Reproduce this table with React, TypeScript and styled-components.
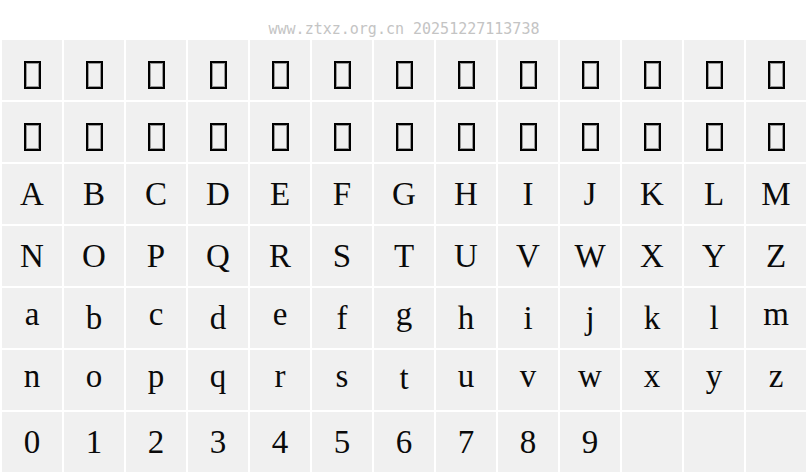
import React from 'react'
import styled, { createGlobalStyle } from 'styled-components'

const GlobalStyle = createGlobalStyle`
  html, body {
    margin: 0;
    padding: 0;
    background: #fff;
  }
`

const Page = styled.div`
  width: 808px;
  display: flex;
  flex-flow: column;
`

const Stamp = styled.div`
  box-sizing: border-box;
  height: 40px;
  padding-top: 21px;
  text-align: center;
  font-family: 'DejaVu Sans Mono', 'Liberation Mono', monospace;
  font-size: 15px;
  line-height: 17px;
  color: #c4c4c4;
`

const Grid = styled.div`
  display: grid;
  grid-template-columns: repeat(13, 60px);
  grid-auto-rows: 60px;
  gap: 2px;
  padding: 0 2px 2px;
`

const Cell = styled.div`
  display: flex;
  align-items: center;
  justify-content: center;
  background: #f0f0f0;
`

const Glyph = styled.span<{ $drop: number }>`
  font-family: 'Liberation Serif', 'Times New Roman', serif;
  font-size: 33px;
  line-height: 1;
  color: #0a0a0a;
  transform: translateY(${(p) => p.$drop}px);
`

// missing-glyph box, as the preview draws it for characters the font lacks
const Tofu = styled.span`
  box-sizing: border-box;
  width: 17px;
  height: 28px;
  margin-top: 10px;
  border: 2px solid #000;
  box-shadow: inset 0 0 0 1px #9a9a9a;
`

const SHORT = 'acemnorsuvwxzgpqy'

const dropFor = (ch: string) => {
  if (SHORT.includes(ch)) return -4
  if (ch === 't') return -2
  return 0
}

const rows = [
  'ABCDEFGHIJKLM',
  'NOPQRSTUVWXYZ',
  'abcdefghijklm',
  'nopqrstuvwxyz',
  '0123456789',
]

export default function App() {
  return (
    <Page>
      <GlobalStyle />
      <Stamp>www.ztxz.org.cn 20251227113738</Stamp>
      <Grid>
        {Array.from({ length: 26 }, (_, i) => (
          <Cell key={'t' + i}>
            <Tofu />
          </Cell>
        ))}
        {rows.map((row) =>
          row.split('').map((ch) => (
            <Cell key={ch}>
              <Glyph $drop={dropFor(ch)}>{ch}</Glyph>
            </Cell>
          ))
        )}
        {Array.from({ length: 3 }, (_, i) => (
          <Cell key={'e' + i} />
        ))}
      </Grid>
    </Page>
  )
}
